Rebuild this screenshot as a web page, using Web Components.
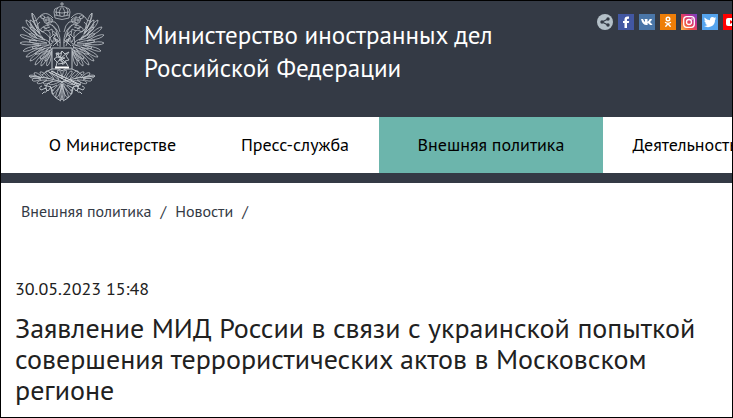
<!DOCTYPE html>
<html lang="ru">
<head>
<meta charset="utf-8">
<meta name="viewport" content="width=device-width, initial-scale=1">
<title>Министерство иностранных дел Российской Федерации</title>
<style>
  * {
    box-sizing: border-box;
  }
  body {
    margin: 0;
    min-height: 100vh;
    border: 1px solid #000;
    overflow-x: hidden;
    background: #fff;
    color: #212121;
    font-family: "PT Sans", "Noto Sans", sans-serif;
    --color-dark: #343a45;
    --color-accent: #6cb5ac;
  }
</style>
</head>
<body>
<site-header>
  <state-emblem slot="logo"></state-emblem>
  <span slot="title">Министерство иностранных дел Российской Федерации</span>
  <social-links slot="social"></social-links>
</site-header>
<main-nav>
  <nav-item href="#ministry">О Министерстве</nav-item>
  <nav-item href="#press">Пресс-служба</nav-item>
  <nav-item href="#policy" active>Внешняя политика</nav-item>
  <nav-item href="#activity">Деятельность</nav-item>
</main-nav>
<bread-crumbs>
  <a href="#policy">Внешняя политика</a>
  <a href="#news">Новости</a>
</bread-crumbs>
<news-article>
  <time slot="date" datetime="2023-05-30T15:48">30.05.2023 15:48</time>
  <span slot="title">Заявление МИД России в связи с украинской попыткой совершения террористических актов в Московском регионе</span>
</news-article>

<script>
  class SiteHeader extends HTMLElement {
    connectedCallback() {
      if (!this.shadowRoot) {
        this.attachShadow({ mode: 'open' }).innerHTML = `
          <style>
            :host {
              display: block;
              background: var(--color-dark);
              color: #fff;
            }
            header {
              display: flex;
              align-items: flex-start;
              height: 116px;
              padding-left: 16px;
              overflow: hidden;
            }
            h1 {
              flex: 0 0 360px;
              margin: 18px 0 0 37px;
              font-size: 25px;
              font-weight: 400;
              line-height: 33px;
            }
            slot[name="social"] {
              display: block;
              flex: none;
              margin: 13px 0 0 93px;
            }
          </style>
          <header>
            <slot name="logo"></slot>
            <h1><slot name="title"></slot></h1>
            <slot name="social"></slot>
          </header>
        `;
      }
    }
  }

  class StateEmblem extends HTMLElement {
    // feather with a rounded tip
    feather([x1, y1, x2, y2]) {
      const dx = x2 - x1;
      const dy = y2 - y1;
      const len = Math.hypot(dx, dy);
      const nx = (-dy / len) * 3;
      const ny = (dx / len) * 3;
      const mx = x1 + dx * 0.85;
      const my = y1 + dy * 0.85;
      return `M${x1} ${y1}Q${mx + nx} ${my + ny} ${x2} ${y2}Q${mx - nx} ${my - ny} ${x1} ${y1}`;
    }

    connectedCallback() {
      if (!this.shadowRoot) {
        const wing = [
          [23, 34, 15, 13], [20, 35, 9, 20], [20, 38, 5, 27], [20, 41, 3, 35],
          [22, 44, 3, 43], [24, 45, 6, 51], [26, 47, 9, 57], [28, 48, 13, 61],
          [31, 49, 18, 65], [33, 50, 24, 66], [35, 51, 30, 66],
          [22, 33, 13, 20], [26, 38, 13, 27], [28, 40, 12, 34], [30, 43, 12, 41],
          [32, 45, 15, 48], [34, 47, 18, 54], [35, 49, 23, 59], [35, 51, 28, 61]
        ];
        const leaves = [
          [24, 78, 12, 76], [26, 78, 17, 73], [24, 79, 15, 80], [32, 79, 23, 72],
          [30, 80, 20, 83], [37, 79, 29, 71], [36, 81, 26, 83], [42, 80, 35, 71],
          [44, 81, 32, 84], [45, 79, 41, 70]
        ];
        const tail = [[45, 82, 35, 94], [45, 84, 39, 98], [45, 84, 44, 100]];
        const feathers = [...wing, ...leaves, ...tail].map(this.feather).join('');

        this.attachShadow({ mode: 'open' }).innerHTML = `
          <style>
            :host {
              display: block;
              flex: none;
            }
            svg {
              display: block;
              fill: none;
              stroke: #bcc2c8;
              stroke-width: .8;
            }
          </style>
          <svg width="90" height="102" viewBox="0 1 90 102" role="img" aria-label="Герб">
            <defs>
              <g id="half">
                <path d="${feathers}"/>
                <path d="M15 13Q17 26 24 31Q32 34 35 42M13 24Q17 34 25 38Q32 40 35 46"/>
                <path d="M43 47Q44 36 40 30Q36 24 32 24L26 27Q22 29 25 32L29 30Q34 31 33 36Q31 42 34 49M26 27L30 28.500M27 29L33 27M29 24Q33 20 38 22Q42 25 43 32M31 31L35 29L36 35M35 25L39 30L41 37M33 38L37 34L39 42M35 42L38 38L41 46M36 31L40 34L36 38L41 41L36 46M38 33L43 40L38 44M34 44L40 39L43 43"/>
                <circle cx="31" cy="25.500" r=".7"/>
                <path d="M28 23L26 19Q28 17 31 18Q34 17 36 20L34 23ZM29 22L29 19M32 22L32 18M27 20H35M31 18V16"/>
                <path d="M36 18Q31 12 26 14Q22 15 24 18Q27 20 28 17Q26 14 22 17Q20 22 16 21M23 22Q19 25 20 28"/>
                <path d="M35 69Q29 71 25 75M46 82L30 78L12 76M25 86Q21 87 24 90L29 88Q31 93 27 92L25 94M27 85L34 87L31 91L28 88M32 83Q28 85 29 88M33 86L36 91M40 85L34 88Q34 96 44 101" stroke-width="1"/>
              </g>
            </defs>
            <use href="#half"/>
            <use href="#half" transform="matrix(-1 0 0 1 90 0)"/>
            <path d="M32 72L62 87M34 71L64 85" stroke="#d8dce0" stroke-width="1"/>
            <path d="M38 18L37 12Q37 8 40 8Q43 6 45 7Q47 6 50 8Q53 8 53 12L52 18Q45 21 38 18ZM38 15Q45 18 52 15M40 15Q38 10 41 8M43 16Q41 11 44 8M47 16Q49 11 46 8M50 15Q52 10 49 8M38 12Q45 14 52 12M45 7V2M43 4H47"/>
            <path d="M35 48H55V69H48L45 71L42 69H35Z" fill="#343a45" stroke-width="1"/>
            <path d="M39 67L40 62L37 59L40 57L39 53L43 54L45 51L48 54L52 52L49 56L52 60L48 61L51 66M40 57L48 58L42 60L48 63L41 64M39 53L50 64M45 51L43 59L40 63M50 53L44 58L46 65M41 52L42 58" stroke-width="1"/>
            <path d="M38 67.500H52" stroke="#fff" stroke-width="2"/>
          </svg>
        `;
      }
    }
  }

  class SocialLinks extends HTMLElement {
    connectedCallback() {
      if (!this.shadowRoot) {
        this.attachShadow({ mode: 'open' }).innerHTML = `
          <style>
            :host {
              display: flex;
              gap: 5px;
            }
            a {
              display: block;
            }
            svg {
              display: block;
              width: 16px;
              height: 16px;
            }
          </style>
          <a href="#share" aria-label="Поделиться"><svg viewBox="0 0 16 16">
            <circle cx="8" cy="8" r="8" fill="#b4c0c8"/>
            <path d="M11 5L5 8L11 11" fill="none" stroke="#343a45" stroke-width="1.200"/>
            <g fill="#343a45"><circle cx="11" cy="5" r="1.700"/><circle cx="5" cy="8" r="1.700"/><circle cx="11" cy="11" r="1.700"/></g>
          </svg></a>
          <a href="#facebook" aria-label="Facebook"><svg viewBox="0 0 16 16">
            <rect width="16" height="16" fill="#4257a2"/>
            <path d="M11 2.500H9.500Q6.500 2.500 6.500 5.500V7H5V9H6.500V14H9V9H10.800L11.200 7H9V5.500Q9 4.700 10 4.700H11Z" fill="#fff"/>
          </svg></a>
          <a href="#vk" aria-label="ВКонтакте"><svg viewBox="0 0 16 16">
            <rect width="16" height="16" fill="#4a76a8"/>
            <path d="M2 5H4Q5 7.500 6 8V6L5.300 5H8.500V7.800Q9.800 7 10.700 5H13Q12.500 6.800 11 8Q12.600 9.300 13.500 11H11Q10 9.500 8.600 9V11H7.500Q3.500 11 2 5Z" fill="#fff"/>
          </svg></a>
          <a href="#ok" aria-label="Одноклассники"><svg viewBox="0 0 16 16">
            <rect width="16" height="16" fill="#ee7e08"/>
            <g fill="none" stroke="#fff" stroke-width="1.400" stroke-linecap="round"><circle cx="8" cy="5" r="1.800"/><path d="M5.500 8.500Q8 10.200 10.500 8.500M8 9.800L5.800 12.300M8 9.800L10.200 12.300"/></g>
          </svg></a>
          <a href="#instagram" aria-label="Instagram"><svg viewBox="0 0 16 16">
            <defs><linearGradient id="ig" x1="0" y1="1" x2="1" y2="0"><stop stop-color="#fdc04c"/><stop offset=".35" stop-color="#f0523f"/><stop offset=".65" stop-color="#cf2f86"/><stop offset="1" stop-color="#6a45c8"/></linearGradient></defs>
            <rect width="16" height="16" fill="url(#ig)"/>
            <g fill="none" stroke="#fff" stroke-width="1.300"><rect x="2.700" y="2.700" width="10.600" height="10.600" rx="3"/><circle cx="8" cy="8" r="2.500"/></g>
            <circle cx="11" cy="5" r=".8" fill="#fff"/>
          </svg></a>
          <a href="#twitter" aria-label="Twitter"><svg viewBox="0 0 16 16">
            <rect width="16" height="16" fill="#55a4ee"/>
            <path d="M2.500 3.500Q5 6 8 6.200Q7.700 3.300 10.300 3Q11.500 3 12.300 3.800L14 3.200L13 4.800L14.300 4.500L13 5.900Q13 10 10 12Q6 14.300 2 12Q4.200 12 5.500 11Q3.700 10.700 3.200 9.200H4.300Q2.300 8.400 2.300 6.500L3.500 6.800Q1.800 5.300 2.500 3.500Z" fill="#fff"/>
          </svg></a>
          <a href="#youtube" aria-label="YouTube"><svg viewBox="0 0 16 16">
            <rect width="16" height="16" fill="#f00"/>
            <rect x="3" y="4" width="11" height="8" rx="2" fill="#fff"/>
            <path d="M7 6V10L10.500 8Z" fill="#f00"/>
          </svg></a>
        `;
      }
    }
  }

  class MainNav extends HTMLElement {
    connectedCallback() {
      if (!this.shadowRoot) {
        this.attachShadow({ mode: 'open' }).innerHTML = `
          <style>
            :host {
              display: block;
              overflow: hidden;
              border-bottom: 10px solid var(--color-dark);
            }
            nav {
              display: grid;
              grid-template-columns: 197px 168px 224px 164px;
              padding-left: 13px;
            }
          </style>
          <nav><slot></slot></nav>
        `;
      }
    }
  }

  class NavItem extends HTMLElement {
    connectedCallback() {
      if (!this.shadowRoot) {
        this.attachShadow({ mode: 'open' }).innerHTML = `
          <style>
            :host {
              display: block;
            }
            :host([active]) {
              background: var(--color-accent);
            }
            a {
              display: block;
              color: #000;
              font-size: 18px;
              line-height: 56px;
              text-align: center;
              text-decoration: none;
              white-space: nowrap;
            }
          </style>
          <a href="${this.getAttribute('href')}"><slot></slot></a>
        `;
      }
    }
  }

  class BreadCrumbs extends HTMLElement {
    connectedCallback() {
      if (!this.shadowRoot) {
        this.attachShadow({ mode: 'open' }).innerHTML = `
          <style>
            :host {
              display: block;
              padding: 18px 20px 0;
              color: #343a45;
              font-size: 16px;
              line-height: 20px;
            }
            nav {
              display: flex;
            }
            ::slotted(a) {
              color: inherit;
              text-decoration: none;
            }
            ::slotted(a)::after {
              content: "/";
              margin: 0 9px;
            }
          </style>
          <nav aria-label="Навигация"><slot></slot></nav>
        `;
      }
    }
  }

  class NewsArticle extends HTMLElement {
    connectedCallback() {
      if (!this.shadowRoot) {
        this.attachShadow({ mode: 'open' }).innerHTML = `
          <style>
            :host {
              display: block;
              padding: 56px 14px 0;
            }
            p {
              margin: 0;
              font-size: 18px;
              line-height: 24px;
            }
            h2 {
              margin: 11px 0 0;
              font-size: 28px;
              font-weight: 400;
              line-height: 31px;
            }
          </style>
          <article>
            <p><slot name="date"></slot></p>
            <h2><slot name="title"></slot></h2>
          </article>
        `;
      }
    }
  }

  customElements.define('site-header', SiteHeader);
  customElements.define('state-emblem', StateEmblem);
  customElements.define('social-links', SocialLinks);
  customElements.define('main-nav', MainNav);
  customElements.define('nav-item', NavItem);
  customElements.define('bread-crumbs', BreadCrumbs);
  customElements.define('news-article', NewsArticle);
</script>
</body>
</html>
